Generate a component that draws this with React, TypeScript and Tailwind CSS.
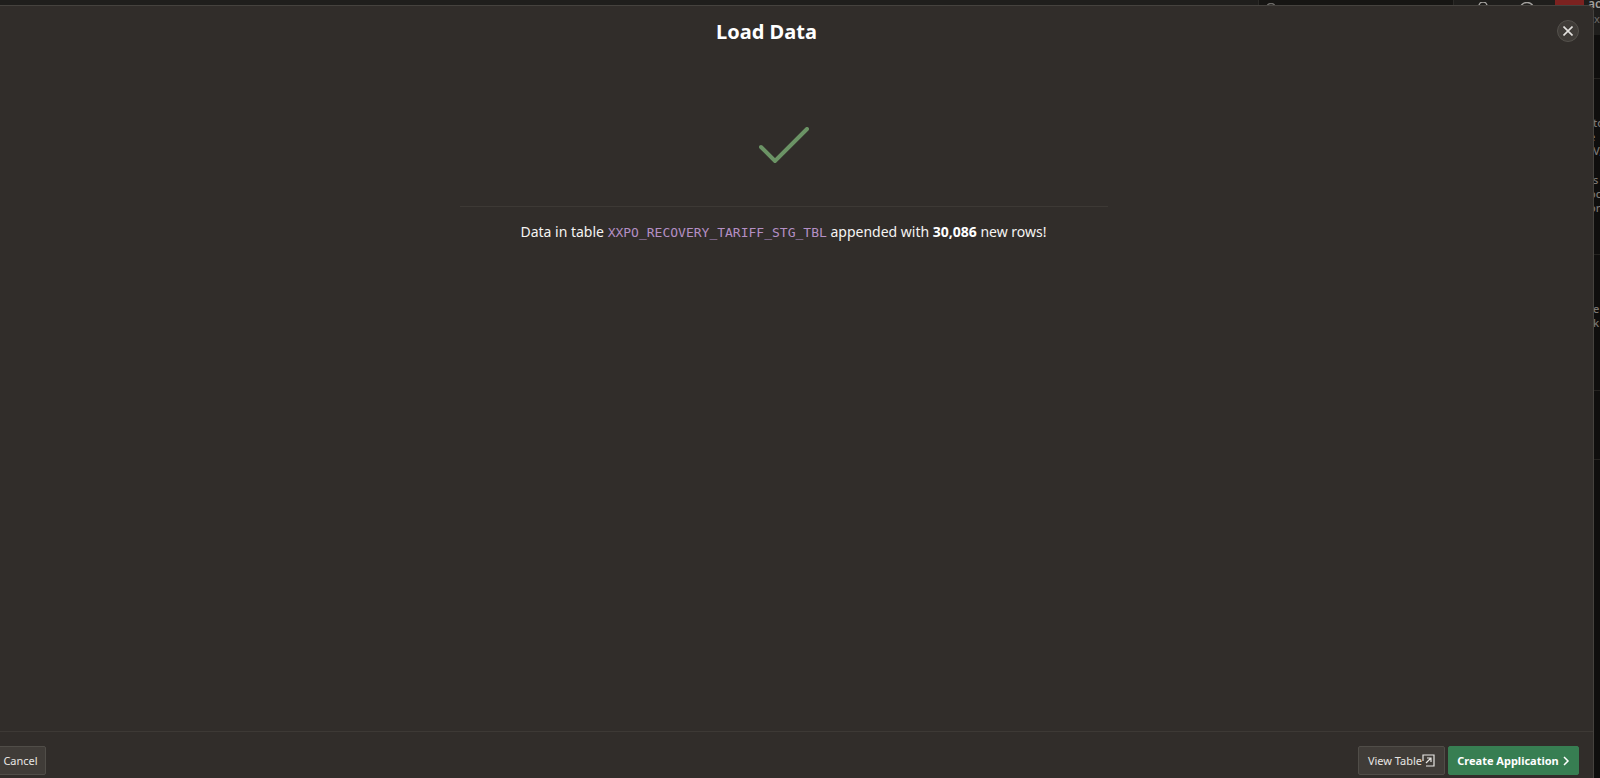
import type { ReactNode } from "react";

function PageHeader() {
  return (
    <header className="flex h-[35px] items-start justify-end overflow-hidden bg-[#1f1e1c] text-[#a3a19e]">
      <div className="h-7 w-[196px] border-x border-[#2b2a27] bg-[#161513] pt-[3px] pl-[6px]">
        <svg width="14" height="14" viewBox="0 0 14 14" fill="none" stroke="#6d6b68" strokeWidth="1.5" aria-hidden="true">
          <circle cx="6" cy="5" r="4.5" />
          <path d="M9 8l4 4" />
        </svg>
      </div>
      <div className="flex w-[101px] pt-0.5 pl-6">
        <svg width="42" height="14" viewBox="0 0 42 14" fill="none" stroke="#a3a19e" strokeWidth="1.5" aria-hidden="true">
          <circle cx="5" cy="4" r="4" />
          <path d="M0 14c0-3 2-5 5-5s5 2 5 5" />
        </svg>
        <svg width="16" height="16" viewBox="0 0 16 16" fill="none" stroke="#a3a19e" strokeWidth="1.5" aria-hidden="true">
          <circle cx="7" cy="7.5" r="7" />
        </svg>
      </div>
      <div className="h-7 w-[29px] bg-[#7c2220]" />
      <div className="w-4 pl-1 whitespace-nowrap">
        <div className="-mt-1 text-[12px] leading-4 font-semibold">ac</div>
        <div className="pl-1.5 text-[11px] leading-[14px] text-[#6d6b68]">xx</div>
      </div>
    </header>
  );
}

function SidePanel() {
  return (
    <div className="flex justify-end overflow-hidden text-[11px] leading-[14px] font-medium whitespace-nowrap text-[#7b7875]">
      <div className="w-[7px]">
        <div className="h-11 border-b border-[#24221f]" />
        <div className="h-[176px] border-b border-[#24221f] pt-[37px]">
          <p>to</p>
          <p className="-ml-1">e</p>
          <p>V,</p>
          <p className="mt-[15px]">s</p>
          <p className="-ml-1">oc</p>
          <p className="-ml-1">on</p>
        </div>
        <div className="h-[136px] border-b border-[#24221f] pt-[47px]">
          <p>e</p>
          <p>k</p>
        </div>
        <div className="h-[69px] border-b border-[#24221f]" />
      </div>
    </div>
  );
}

function FooterButton({ primary = false, className = "", children }: { primary?: boolean; className?: string; children: ReactNode }) {
  return (
    <button
      type="button"
      className={`flex h-[29px] items-center justify-center rounded-xs border text-[11px] leading-4 whitespace-nowrap ${
        primary ? "border-[#377e52] bg-[#377e52] font-bold text-white" : "border-[#504d48] bg-[#403c38] text-[#e8e6e3]"
      } ${className}`}
    >
      {children}
    </button>
  );
}

export default function App() {
  return (
    <div className="relative min-h-screen overflow-hidden bg-[#0f0e0d] font-['Noto_Sans','Open_Sans',sans-serif]">
      <PageHeader />
      <SidePanel />

      <section
        role="dialog"
        aria-labelledby="dialog-title"
        className="absolute top-[5px] right-[6px] bottom-0 left-0 flex flex-col rounded-tr-md border-t border-r border-[#45423e] bg-[#312d2a]"
      >
        <header className="flex items-start pt-[14px] pr-[14px]">
          <h1 id="dialog-title" className="flex-1 pr-6 text-center text-[20px] leading-6 font-bold text-white">
            Load Data
          </h1>
          <button
            type="button"
            aria-label="Close"
            className="flex h-[22px] w-[22px] items-center justify-center rounded-full border border-[#54514c] bg-[#403c38]"
          >
            <svg width="10" height="10" viewBox="0 0 10 10" fill="none" stroke="#e4e2df" strokeWidth="1.6" aria-hidden="true">
              <path d="M0.5 0.5l9 9M9.5 0.5l-9 9" />
            </svg>
          </button>
        </header>

        <main className="flex-1 pr-[26px]">
          <div className="mx-auto flex max-w-[648px] flex-col items-center pt-[83px]">
            <svg width="50" height="36" viewBox="0 0 50 36" fill="none" stroke="#6b9365" strokeWidth="4" strokeLinecap="round" aria-hidden="true">
              <path d="M2 20L16 34L48 2" />
            </svg>
            <p className="mt-[43px] w-full border-t border-[#3d3935] pt-[15px] text-center text-[14px] leading-5 whitespace-nowrap text-[#f5f4f2]">
              Data in table{" "}
              <code className="font-['DejaVu_Sans_Mono',monospace] text-[13px] text-[#b48fc4]">XXPO_RECOVERY_TARIFF_STG_TBL</code>{" "}
              appended with <strong className="font-bold text-white">30,086</strong> new rows!
            </p>
          </div>
        </main>

        <footer className="flex items-start border-t border-[#3d3935] pt-[14px] pr-[14px] pb-[3px]">
          <FooterButton className="-ml-2 w-[54px] pl-[3px]">Cancel</FooterButton>
          <FooterButton className="ml-auto w-[87px]">
            View Table
            <svg width="13" height="13" viewBox="0 0 13 13" fill="none" stroke="#e8e6e3" strokeWidth="1.2" aria-hidden="true">
              <path d="M1 7V1h11v11H4" />
              <path d="M4 9l5-5M5 4h4v4" />
            </svg>
          </FooterButton>
          <FooterButton primary className="ml-[3px] w-[131px]">
            Create Application
            <svg className="ml-[3px]" width="8" height="10" viewBox="0 0 8 10" fill="none" stroke="white" strokeWidth="1.5" aria-hidden="true">
              <path d="M2 1l4 4l-4 4" />
            </svg>
          </FooterButton>
        </footer>
      </section>
    </div>
  );
}
